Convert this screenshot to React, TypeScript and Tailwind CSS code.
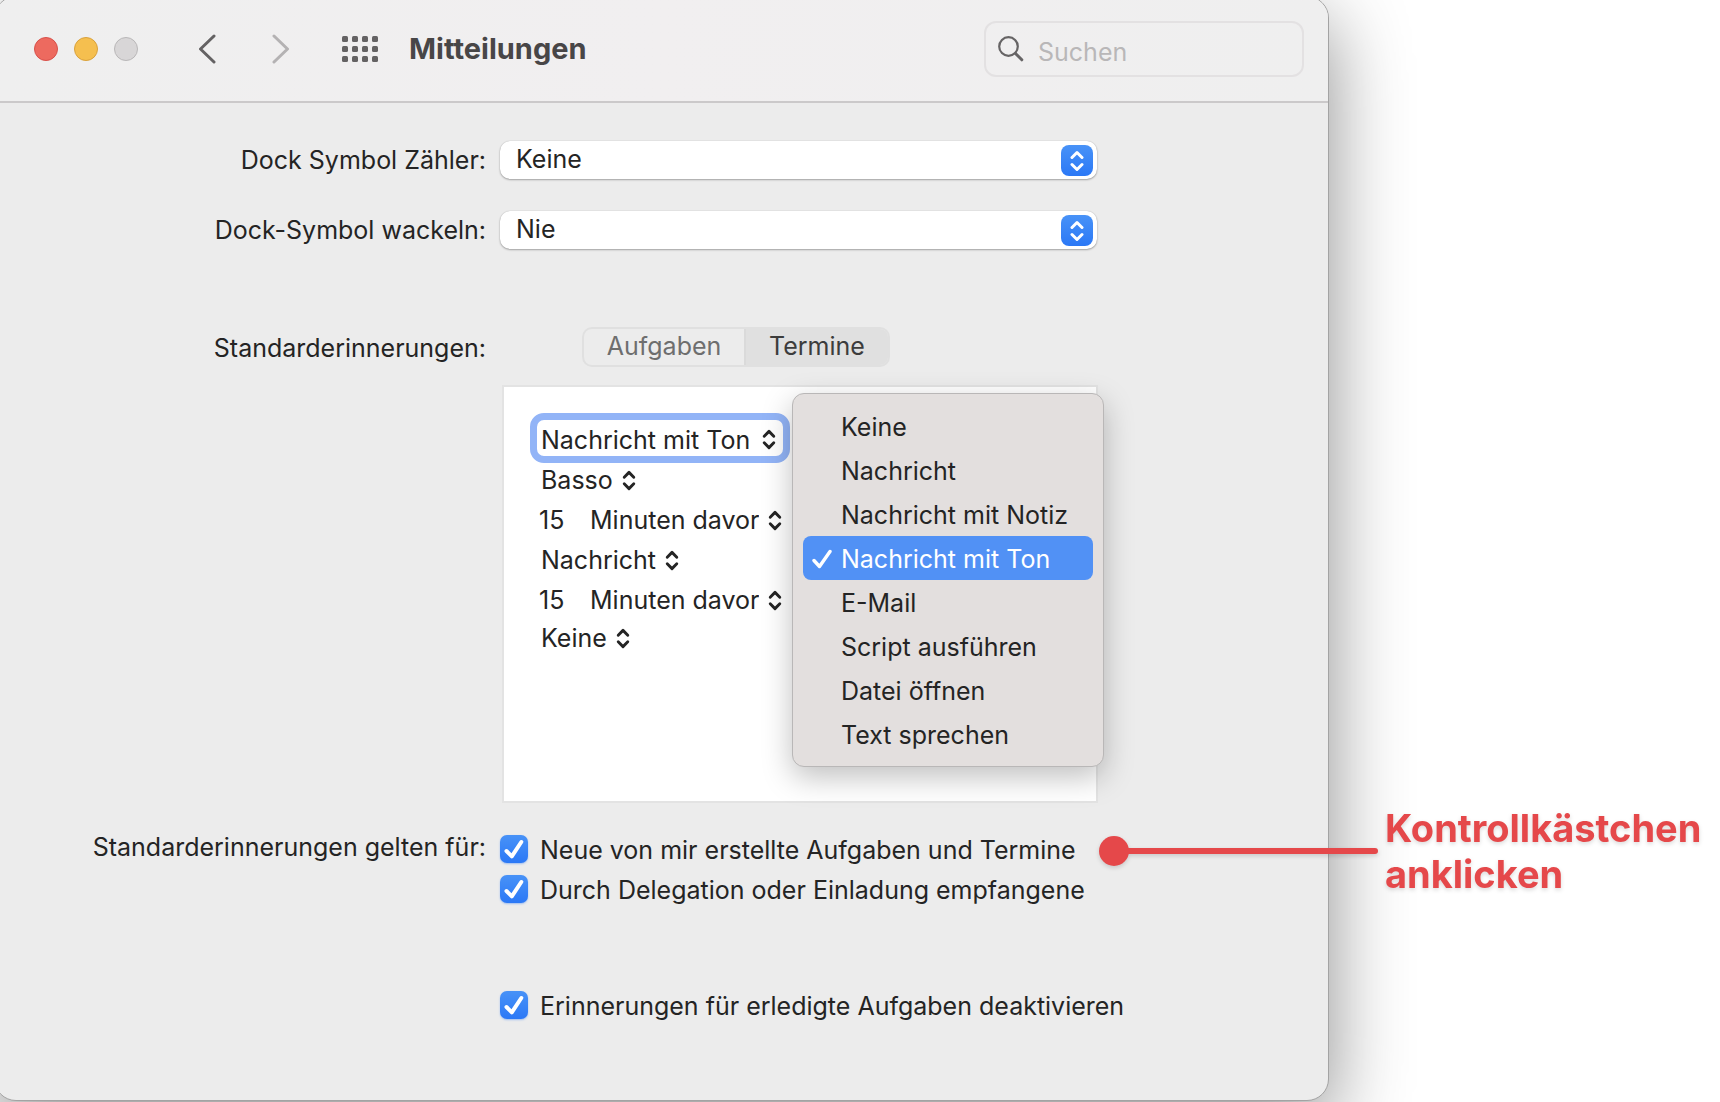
import { useState } from 'react';
import type { ReactNode } from 'react';

const REMINDER_TYPES = [
  'Keine',
  'Nachricht',
  'Nachricht mit Notiz',
  'Nachricht mit Ton',
  'E-Mail',
  'Script ausführen',
  'Datei öffnen',
  'Text sprechen',
];

const GRID_DOTS = [0, 1, 2, 3];

const UpDown = ({ className }: { className?: string }) => (
  <svg viewBox="0 0 14 22" fill="none" stroke="currentColor" strokeWidth="3" strokeLinecap="round" strokeLinejoin="round" className={className} aria-hidden="true">
    <path d="M2 7.5 7 2.5l5 5M2 14.5l5 5 5-5" />
  </svg>
);

interface RowProps {
  label?: string;
  htmlFor?: string;
  labelClass?: string;
  children: ReactNode;
}

const Row = ({ label, htmlFor, labelClass = 'leading-[38px]', children }: RowProps) => (
  <div className="flex items-start">
    <div className={`w-[491px] shrink-0 text-right ${labelClass}`}>
      {label && (htmlFor ? <label htmlFor={htmlFor}>{label}</label> : <span>{label}</span>)}
    </div>
    <div className="ml-[14px] min-w-0 flex-1">{children}</div>
  </div>
);

const PopupSelect = ({ id, options }: { id: string; options: string[] }) => (
  <div className="relative h-[38px] w-[597px]">
    <select
      id={id}
      className="h-full w-full appearance-none rounded-[10px] bg-white px-4 pb-[2px] shadow-[0_1px_2px_rgba(0,0,0,0.3),0_0_1px_rgba(0,0,0,0.25)] outline-none"
    >
      {options.map((o) => (
        <option key={o}>{o}</option>
      ))}
    </select>
    <span className="pointer-events-none absolute top-1 right-1 flex h-[31px] w-8 items-center justify-center rounded-lg bg-linear-to-b from-[#4892f7] to-[#2b78f6] text-white">
      <UpDown className="h-[22px] w-[14px]" />
    </span>
  </div>
);

const InlineSelect = ({ label, options }: { label: string; options: string[] }) => (
  <span className="inline-flex items-center gap-[9px]">
    <select aria-label={label} className="field-sizing-content appearance-none bg-transparent outline-none">
      {options.map((o) => (
        <option key={o}>{o}</option>
      ))}
    </select>
    <UpDown className="pointer-events-none h-[21px] w-[14px]" />
  </span>
);

const OffsetRow = ({ name }: { name: string }) => (
  <div className="flex h-10 items-center">
    <input aria-label={`${name} Anzahl`} defaultValue="15" className="-ml-[2px] w-[51px] bg-transparent outline-none" />
    <InlineSelect label={`${name} Einheit`} options={['Minuten davor', 'Stunden davor', 'Tage davor']} />
  </div>
);

const CheckItem = ({ children }: { children: ReactNode }) => (
  <label className="flex h-7 shrink-0 items-center gap-3">
    <span className="relative size-7">
      <input
        type="checkbox"
        defaultChecked
        className="peer block size-7 appearance-none rounded-[7px] bg-white shadow-[0_1px_2px_rgba(43,120,246,0.4)] checked:bg-linear-to-b checked:from-[#4892f7] checked:to-[#2b78f6]"
      />
      <svg viewBox="0 0 28 28" fill="none" stroke="white" strokeWidth="4" strokeLinecap="round" strokeLinejoin="round" className="pointer-events-none absolute inset-0 hidden peer-checked:block" aria-hidden="true">
        <path d="M6.5 16 11.8 21.3 21.3 7" />
      </svg>
    </span>
    <span className="pt-[2px] whitespace-nowrap">{children}</span>
  </label>
);

const Toolbar = () => (
  <header className="flex h-[106px] items-center border-b-2 border-[#cbc9ca] bg-linear-to-r from-[#efefef] via-[#f1eff0] to-[#efefef] pl-[39px]">
    <div className="flex gap-4">
      <button aria-label="Schließen" className="size-6 rounded-full border border-[#d8504a] bg-[#ed6a5f]" />
      <button aria-label="Minimieren" className="size-6 rounded-full border border-[#d9a13c] bg-[#f5bf4f]" />
      <button aria-label="Maximieren" className="size-6 rounded-full border border-[#b9b7b8] bg-[#d8d6d7]" />
    </div>
    <button aria-label="Zurück" className="ml-[60px] text-[#646263]">
      <svg viewBox="0 0 18 30" fill="none" stroke="currentColor" strokeWidth="3" strokeLinecap="round" strokeLinejoin="round" className="h-[30px] w-[18px]">
        <path d="M16 2 2.5 15 16 28" />
      </svg>
    </button>
    <button aria-label="Vor" className="ml-14 text-[#b4b2b3]">
      <svg viewBox="0 0 18 30" fill="none" stroke="currentColor" strokeWidth="3" strokeLinecap="round" strokeLinejoin="round" className="h-[30px] w-[18px]">
        <path d="M2 2 15.5 15 2 28" />
      </svg>
    </button>
    <button aria-label="Alle einblenden" className="ml-[52px] text-[#646263]">
      <svg viewBox="0 0 36 26" fill="currentColor" className="h-[26px] w-9">
        {[0, 10, 20].map((y) =>
          GRID_DOTS.map((i) => <rect key={`${i}-${y}`} x={i * 10} y={y} width="6" height="6" rx="1.5" />),
        )}
      </svg>
    </button>
    <h1 className="ml-[31px] text-[29px] font-bold text-[#484647]">Mitteilungen</h1>
    <label className="mr-6 ml-auto flex h-14 w-80 items-start gap-[14px] rounded-xl border-2 border-[#e3e1e2] pt-[13px] pl-3">
      <svg viewBox="0 0 26 26" fill="none" stroke="#666465" strokeLinecap="round" className="size-[26px] shrink-0" aria-hidden="true">
        <circle cx="10.5" cy="10.5" r="9.3" strokeWidth="2.2" />
        <path d="m17.5 17.5 6.3 6.3" strokeWidth="3" />
      </svg>
      <input type="search" aria-label="Suchen" placeholder="Suchen" className="w-full min-w-0 bg-transparent outline-none placeholder:text-[#b9b7b8]" />
    </label>
  </header>
);

const ReminderMenu = ({ selected, onSelect }: { selected: string; onSelect: (v: string) => void }) => (
  <ul
    role="listbox"
    aria-label="Erinnerungstyp"
    className="absolute top-[6px] left-[288px] z-10 w-[312px] rounded-xl border border-[#b9b7b7] bg-[#e3dfde] p-[10px] shadow-[0_10px_30px_rgba(0,0,0,0.25)]"
  >
    {REMINDER_TYPES.map((type) => {
      const active = type === selected;
      return (
        <li
          key={type}
          role="option"
          aria-selected={active}
          onClick={() => onSelect(type)}
          className={
            active
              ? 'flex h-11 items-center rounded-lg bg-[#5191f5] pt-[2px] text-white'
              : 'flex h-11 items-center rounded-lg pt-[2px]'
          }
        >
          <span className="flex w-[38px] shrink-0 pl-[9px]">
            {active && (
              <svg viewBox="0 0 20 20" fill="none" stroke="currentColor" strokeWidth="3.4" strokeLinecap="round" strokeLinejoin="round" className="size-5" aria-hidden="true">
                <path d="M2 11.5 7.5 17.5 18 2.5" />
              </svg>
            )}
          </span>
          {type}
        </li>
      );
    })}
  </ul>
);

export default function App() {
  const [tab, setTab] = useState('Termine');
  const [reminder, setReminder] = useState('Nachricht mit Ton');

  return (
    <div className="flex min-h-screen items-start overflow-hidden bg-white font-['Inter','Liberation_Sans',sans-serif] text-[25px] leading-8 text-[#242424]">
      <main className="relative -mt-1 -ml-[6px] min-w-0 flex-1 rounded-[22px] border border-[#a3a3a3] bg-[#ececec] shadow-[0_24px_80px_rgba(0,0,0,0.45)]">
        <div className="overflow-hidden rounded-t-[21px]">
          <Toolbar />
        </div>

        <div className="pt-[38px] pb-[81px]">
          <div className="flex flex-col gap-8">
            <Row label="Dock Symbol Zähler:" htmlFor="dock-counter">
              <PopupSelect id="dock-counter" options={['Keine', 'Aufgaben', 'Termine']} />
            </Row>
            <Row label="Dock-Symbol wackeln:" htmlFor="dock-bounce">
              <PopupSelect id="dock-bounce" options={['Nie', 'Einmal', 'Immer']} />
            </Row>
          </div>

          <div className="mt-[78px]">
            <Row label="Standarderinnerungen:" labelClass="leading-[42px]">
              <div className="ml-[82px] flex h-10 w-[308px] overflow-hidden rounded-[10px] border-2 border-[#e0e0e0]">
                {['Aufgaben', 'Termine'].map((t) => (
                  <button
                    key={t}
                    aria-pressed={tab === t}
                    onClick={() => setTab(t)}
                    className={
                      tab === t
                        ? 'flex-1 bg-[#e0e0e0] pb-[2px] text-[#3c3c3c]'
                        : 'w-[162px] border-r-2 border-[#dadada] pb-[2px] text-[#6e6e6e]'
                    }
                  >
                    {t}
                  </button>
                ))}
              </div>
            </Row>
          </div>

          <div className="mt-[16px]">
            <Row>
              <div className="relative ml-[2px] h-[418px] w-[596px] border-2 border-[#e3e3e3] bg-white pt-[26px] pl-[26px]">
                <button
                  aria-haspopup="listbox"
                  aria-expanded="true"
                  className="flex h-[50px] min-w-[260px] items-center justify-between gap-2 rounded-[14px] border-[7px] border-[#92b4f7] pt-[3px] pr-[7px] pl-1 whitespace-nowrap"
                >
                  {reminder}
                  <UpDown className="h-[21px] w-[14px]" />
                </button>
                <div className="-mt-[3px] pl-[11px]">
                  <div className="flex h-10 items-center">
                    <InlineSelect label="Ton" options={['Basso', 'Blow', 'Glass']} />
                  </div>
                  <OffsetRow name="Erste Erinnerung" />
                  <div className="flex h-10 items-center">
                    <InlineSelect label="Zweite Erinnerung" options={['Nachricht', 'E-Mail']} />
                  </div>
                  <OffsetRow name="Zweite Erinnerung" />
                  <div className="flex h-9 items-center">
                    <InlineSelect label="Dritte Erinnerung" options={['Keine', 'Nachricht']} />
                  </div>
                </div>
                <ReminderMenu selected={reminder} onSelect={setReminder} />
              </div>
            </Row>
          </div>

          <div className="mt-8">
            <Row label="Standarderinnerungen gelten für:" labelClass="leading-6">
              <div className="flex flex-col gap-3">
                <div className="flex items-center">
                  <CheckItem>Neue von mir erstellte Aufgaben und Termine</CheckItem>
                  <div className="mt-1 -mr-[50px] ml-auto flex w-[279px] items-center drop-shadow-[0_2px_2px_rgba(0,0,0,0.15)]">
                    <span className="-my-1 size-[30px] rounded-full bg-[#e5484a]" />
                    <span className="-ml-1 h-[6px] flex-1 rounded-r-full bg-[#e5484a]" />
                  </div>
                </div>
                <CheckItem>Durch Delegation oder Einladung empfangene</CheckItem>
              </div>
              <div className="mt-[88px]">
                <CheckItem>Erinnerungen für erledigte Aufgaben deaktivieren</CheckItem>
              </div>
            </Row>
          </div>
        </div>
      </main>

      <aside className="w-[391px] shrink-0 pt-[805px] pl-[56px]">
        <p className="text-[38px] leading-[46px] font-bold text-[#e5484a] drop-shadow-[0_2px_2px_rgba(0,0,0,0.15)]">
          Kontrollkästchen anklicken
        </p>
      </aside>
    </div>
  );
}
